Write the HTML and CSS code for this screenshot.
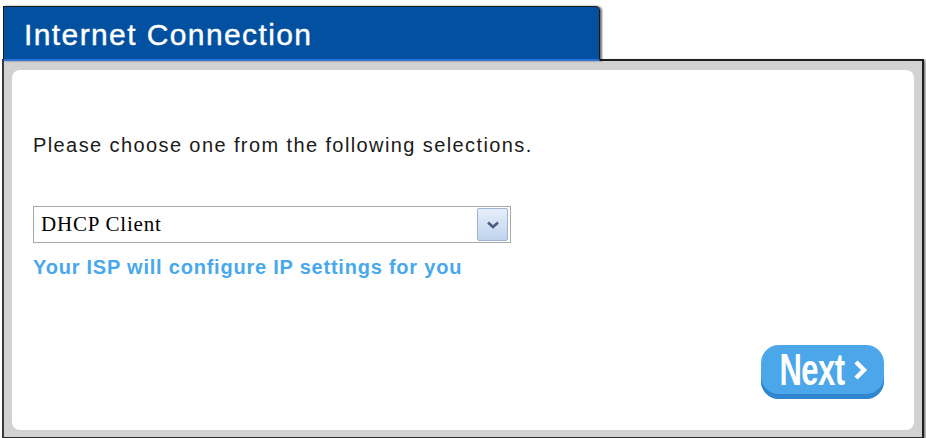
FILE: index.html
```html
<!DOCTYPE html>
<html lang="en">
<head>
<meta charset="utf-8">
<title>Internet Connection</title>
<link rel="stylesheet" href="styles.css">
</head>
<body>
<div class="wizard">
  <div class="tab"><span class="tab-title">Internet Connection</span></div>
  <div class="frame">
    <div class="panel">
      <p class="prompt">Please choose one from the following selections.</p>
      <div class="select">
        <span class="select-value">DHCP Client</span>
        <span class="select-btn">
          <svg width="14" height="10" viewBox="0 0 14 10"><path d="M2 2.5 L7 7 L12 2.5" fill="none" stroke="#4a5d80" stroke-width="2.6"/></svg>
        </span>
      </div>
      <p class="hint">Your ISP will configure IP settings for you</p>
      <div class="actions">
        <button class="next" type="button">
          <span class="next-label">Next</span>
          <svg class="next-arrow" width="15" height="22" viewBox="0 0 15 22"><path d="M3 3 L11 11 L3 19" fill="none" stroke="#ffffff" stroke-width="4.4" stroke-linejoin="miter"/></svg>
        </button>
      </div>
    </div>
  </div>
</div>
</body>
</html>
```
FILE: styles.css
```css
html, body {
  margin: 0;
  padding: 0;
  background: #ffffff;
}

.wizard {
  width: 922px;
  padding: 6px 0 0 2px;
  display: flex;
  flex-direction: column;
  font-family: "Liberation Sans", Arial, sans-serif;
}

.tab {
  position: relative;
  z-index: 2;
  width: 595px;
  height: 52px;
  margin-left: 1px;
  margin-bottom: -2px;
  background: #0151a0;
  border: 1px solid #1a1a1a;
  border-bottom: 2px solid #2a72d6;
  border-top-right-radius: 5px;
  box-shadow: 2px 0 2px rgba(0, 0, 0, 0.55);
  display: flex;
  align-items: center;
}

.tab-title {
  color: #ffffff;
  font-size: 30px;
  line-height: 34px;
  padding-left: 20px;
  padding-top: 3px;
  letter-spacing: 1.4px;
  -webkit-text-stroke: 0.4px #ffffff;
}

.frame {
  height: 360px;
  background: #d2d2d2;
  border-top: 2px solid #1f1f1f;
  border-left: 2px solid #3a3a3a;
  border-right: 2px solid #1f1f1f;
  border-bottom: 2px solid #2a2a2a;
  box-shadow: 2px 1px 2px rgba(0, 0, 0, 0.45);
  padding: 9px 8px 7px 8px;
  display: flex;
}

.panel {
  flex: 1;
  background: #ffffff;
  border-radius: 8px;
  padding: 0 0 0 21px;
  display: flex;
  flex-direction: column;
}

.prompt {
  margin: 65px 0 0 0;
  font-size: 20px;
  line-height: 21px;
  color: #1a1a1a;
  letter-spacing: 1.4px;
}

.select {
  margin-top: 50px;
  width: 476px;
  height: 35px;
  border: 1px solid #a8a8a8;
  display: flex;
  align-items: center;
  justify-content: space-between;
}

.select-value {
  font-family: "Liberation Serif", "Times New Roman", serif;
  font-size: 21px;
  color: #000;
  padding-left: 7px;
  letter-spacing: 0.8px;
}

.select-btn {
  width: 29px;
  height: 31px;
  margin-right: 2px;
  border: 1px solid #9db3d3;
  border-radius: 2px;
  background: linear-gradient(#e6eefa, #c0d3ec);
  display: flex;
  align-items: center;
  justify-content: center;
}

.hint {
  margin: 14px 0 0 0;
  font-size: 20px;
  line-height: 21px;
  font-weight: bold;
  color: #48a8ec;
  letter-spacing: 0.78px;
}

.actions {
  display: flex;
  justify-content: flex-end;
  padding-right: 30px;
  margin-top: 67px;
}

.next {
  width: 123px;
  height: 54px;
  border: none;
  border-radius: 18px;
  background: #4ca6ea;
  box-shadow: inset 0 -5px 0 #2f86cf;
  display: flex;
  align-items: center;
  justify-content: center;
  gap: 8px;
  padding: 0 0 5px 2px;
  color: #ffffff;
  cursor: pointer;
}

.next-label {
  font-family: "Liberation Sans", Arial, sans-serif;
  font-weight: bold;
  font-size: 31px;
  line-height: 1;
  letter-spacing: -0.5px;
  display: inline-block;
  transform: scaleY(1.45);
}

.next-arrow {
  display: block;
}
```
